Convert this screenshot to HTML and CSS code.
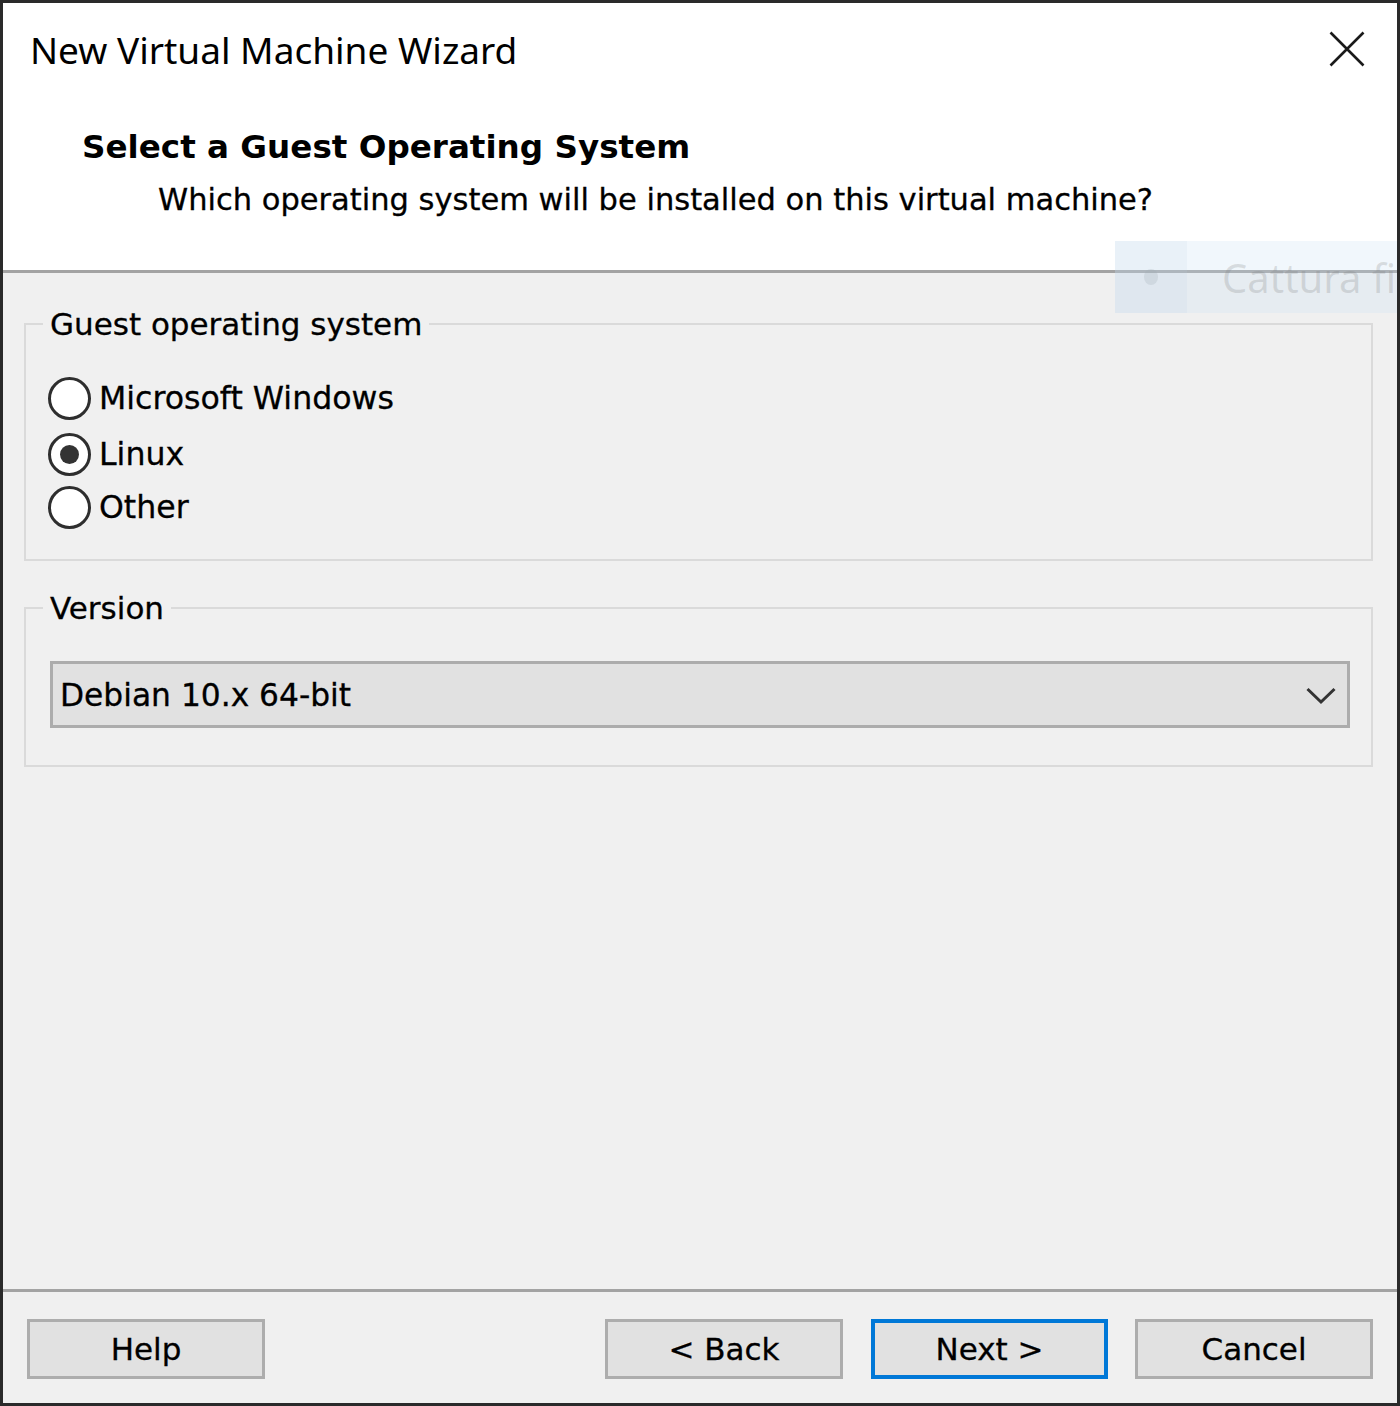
FILE: index.html
```html
<!DOCTYPE html>
<html>
<head>
<meta charset="utf-8">
<title>New Virtual Machine Wizard</title>
<link rel="stylesheet" href="styles.css">
</head>
<body>
<div class="window">
  <div class="header">
    <div class="titlebar">
      <span class="title">New Virtual Machine Wizard</span>
      <svg class="close" width="36" height="36" viewBox="0 0 36 36"><path d="M1.5 1.5 L34.5 34.5 M34.5 1.5 L1.5 34.5" stroke="#1a1a1a" stroke-width="2.6" fill="none"/></svg>
    </div>
    <div class="heading">Select a Guest Operating System</div>
    <div class="subtitle">Which operating system will be installed on this virtual machine?</div>
  </div>

  <div class="content">
    <fieldset class="group group-os">
      <legend>Guest operating system</legend>
      <div class="radio-row"><span class="radio"></span><span>Microsoft Windows</span></div>
      <div class="radio-row"><span class="radio checked"></span><span>Linux</span></div>
      <div class="radio-row"><span class="radio"></span><span>Other</span></div>
    </fieldset>

    <fieldset class="group group-version">
      <legend>Version</legend>
      <div class="combo">
        <span>Debian 10.x 64-bit</span>
        <svg class="chevron" width="30" height="18" viewBox="0 0 30 18"><path d="M1.5 2 L15 15 L28.5 2" stroke="#333" stroke-width="3" fill="none"/></svg>
      </div>
    </fieldset>
  </div>

  <div class="footer">
    <button class="btn">Help</button>
    <button class="btn btn-back">&lt; Back</button>
    <button class="btn btn-next">Next &gt;</button>
    <button class="btn btn-cancel">Cancel</button>
  </div>

  <div class="capture-tip">
    <span class="tip-icon"><span class="tip-dot"></span></span>
    <span class="tip-text">Cattura fi</span>
  </div>
</div>
</body>
</html>
```

FILE: styles.css
```css
html, body {
  margin: 0;
  padding: 0;
  background: #f0f0f0;
}

body {
  font-family: "DejaVu Sans", "Liberation Sans", sans-serif;
  color: #000;
}

.window {
  position: relative;
  width: 1400px;
  height: 1406px;
  box-sizing: border-box;
  border: 3px solid #2a2a2a;
  background: #f0f0f0;
  display: flex;
  flex-direction: column;
  overflow: hidden;
  -webkit-text-stroke: 0.3px #000;
}

.header {
  height: 267px;
  flex: none;
  background: #fff;
  border-bottom: 3px solid #a3a3a3;
}

.titlebar {
  display: flex;
  justify-content: space-between;
  align-items: center;
  padding: 27px 32px 0 27px;
  height: 40px;
}

.title {
  font-family: "Noto Sans", "Liberation Sans", sans-serif;
  font-size: 37px;
  line-height: 40px;
  color: #000;
  -webkit-text-stroke: 0;
}

.close {
  display: block;
  margin-top: -2px;
}

.heading {
  margin: 57px 0 0 79px;
  font-size: 32.6px;
  font-weight: bold;
  line-height: 40px;
  -webkit-text-stroke: 0;
}

.subtitle {
  margin: 13px 0 0 155px;
  font-size: 30.5px;
  line-height: 40px;
}

.content {
  flex: 1;
  padding: 0 24px 0 21px;
}

.group {
  margin: 0;
  border: 2px solid #dadada;
  padding: 27px 21px 26px 17px;
  font-size: 31px;
}

.group legend {
  padding: 0 7px;
  line-height: 40px;
  font-size: 31px;
}

.group-os {
  margin-top: 31px;
}

.group-version {
  margin-top: 27px;
  padding-top: 33px;
  padding-bottom: 37px;
}

.radio-row {
  display: flex;
  align-items: center;
  height: 54px;
  font-size: 31.6px;
}

.radio-row:nth-child(3) {
  height: 56px;
  padding-top: 2px;
  box-sizing: border-box;
}

.radio-row:nth-child(4) {
  height: 52px;
}

.radio {
  width: 43px;
  height: 43px;
  box-sizing: border-box;
  border: 3.5px solid #2e2e2e;
  border-radius: 50%;
  background: #fff;
  margin: 0 8px 0 5px;
  display: flex;
  align-items: center;
  justify-content: center;
}

.radio.checked::after {
  content: "";
  width: 19px;
  height: 19px;
  border-radius: 50%;
  background: #333;
}

.combo {
  margin-left: 7px;
  height: 67px;
  box-sizing: border-box;
  border: 3px solid #acacac;
  background: #e1e1e1;
  display: flex;
  align-items: center;
  justify-content: space-between;
  padding: 0 11px 0 7px;
  font-size: 31.3px;
}

.chevron {
  display: block;
  margin-top: 2px;
}

.footer {
  flex: none;
  border-top: 3px solid #a3a3a3;
  padding: 27px 24px 24px 24px;
  display: flex;
  align-items: center;
}

.btn {
  height: 60px;
  width: 238px;
  box-sizing: border-box;
  background: #e1e1e1;
  border: 3px solid #adadad;
  font-family: "DejaVu Sans", "Liberation Sans", sans-serif;
  font-size: 31px;
  color: #000;
  padding: 0;
  margin: 0;
  -webkit-text-stroke: 0.3px #000;
}

.btn-back {
  margin-left: auto;
}

.btn-next {
  margin-left: 28px;
  width: 237px;
  border: 4px solid #0078d7;
}

.btn-cancel {
  margin-left: 27px;
}

.capture-tip {
  position: absolute;
  left: 1112px;
  top: 238px;
  width: 300px;
  height: 72px;
  display: flex;
  align-items: center;
  background: rgba(200, 222, 245, 0.25);
  -webkit-text-stroke: 0;
}

.tip-icon {
  width: 72px;
  height: 72px;
  display: flex;
  align-items: center;
  justify-content: center;
  background: rgba(190, 210, 230, 0.15);
}

.tip-dot {
  width: 14px;
  height: 16px;
  border-radius: 50%;
  background: rgba(160, 170, 180, 0.25);
}

.tip-text {
  margin-left: 35px;
  font-family: "Noto Sans", "Liberation Sans", sans-serif;
  font-size: 40px;
  color: rgba(120, 120, 120, 0.22);
  white-space: nowrap;
}
```
